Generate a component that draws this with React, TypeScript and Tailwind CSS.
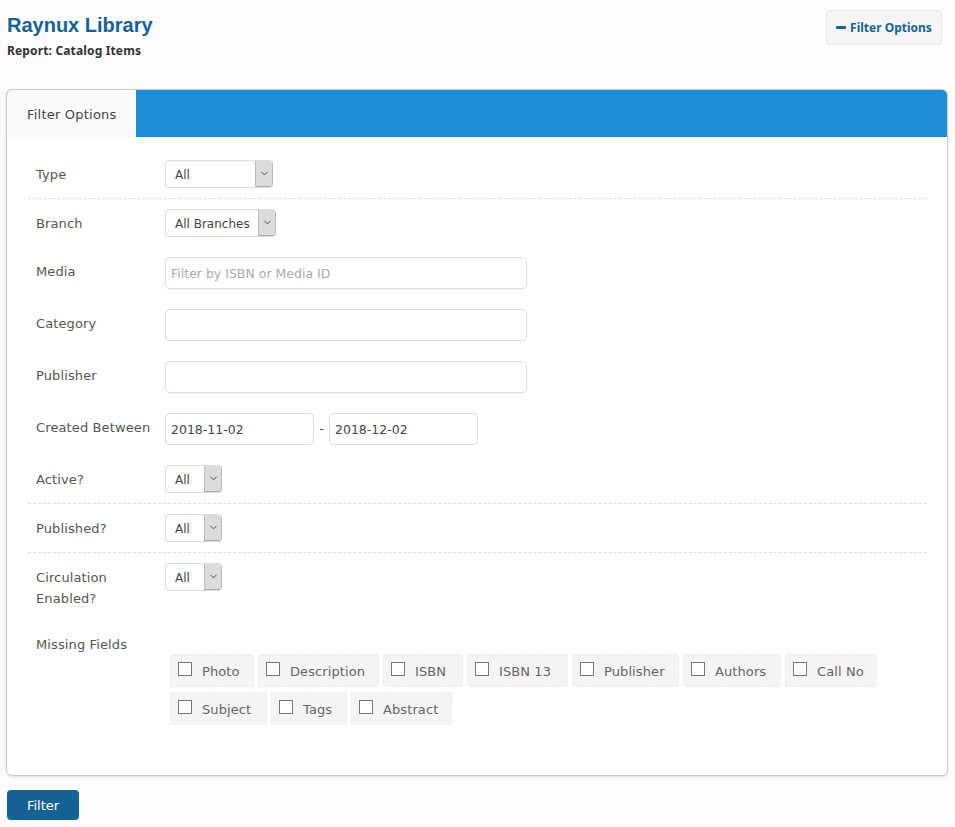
import { ChevronDown } from "lucide-react";

function Label({ children }: { children: React.ReactNode }) {
  return <div className="w-[130px] shrink-0 pl-[1px] pt-[4px] text-[13px] leading-[21px] tracking-[0.12px] text-[#555]">{children}</div>;
}

function Select({ value, width, arrow }: { value: string; width: number; arrow: number }) {
  return (
    <div className="flex h-[28px] overflow-hidden rounded border border-r-0 border-[#ddd] bg-white text-[12px] text-[#444]" style={{ width }}>
      <span className="flex-1 pl-[9px] leading-[28px]">{value}</span>
      <span className="flex items-center justify-center border-x border-b border-x-[#bbb] border-b-[#aaa] bg-[#dcdcdc]" style={{ width: arrow }}>
        <ChevronDown className="h-[11px] w-[11px] text-[#444]" />
      </span>
    </div>
  );
}

function Input({ value, placeholder, width }: { value?: string; placeholder?: string; width: number }) {
  return (
    <div className="h-[32px] rounded border border-[#ddd] bg-white pl-[5px] text-[12.5px] leading-[31px]" style={{ width }}>
      {value ? <span className="text-[#444]">{value}</span> : <span className="text-[#aaa]">{placeholder}</span>}
    </div>
  );
}

function Row({ label, dashed, children }: { label: React.ReactNode; dashed?: boolean; children: React.ReactNode }) {
  return (
    <div className={dashed ? "mb-[10px] flex border-b border-dashed border-[#ddd] pb-[10px] pl-[7px]" : "mb-5 flex pl-[7px]"}>
      <Label>{label}</Label>
      {children}
    </div>
  );
}

function Chip({ label, width }: { label: string; width: number }) {
  return (
    <div className="flex h-[33px] items-start rounded-[3px] border border-dashed border-[#eee] bg-[#f4f4f4] pl-[7px]" style={{ width }}>
      <span className="mt-[7px] h-[14px] w-[14px] shrink-0 border border-[#777] bg-white" />
      <span className="ml-[10px] text-[13px] leading-[33px] tracking-[0.1px] text-[#666]">{label}</span>
    </div>
  );
}

const row1 = [["Photo", 84], ["Description", 121], ["ISBN", 80], ["ISBN 13", 101], ["Publisher", 107], ["Authors", 98], ["Call No", 92]] as const;
const row2 = [["Subject", 97], ["Tags", 76], ["Abstract", 101]] as const;

export default function App() {
  return (
    <div className="h-[827px] overflow-hidden bg-[#fcfcfc] px-[6px]" style={{ fontFamily: '"DejaVu Sans", sans-serif' }}>
      {/* Header */}
      <div className="flex h-[89px] items-start justify-between">
        <div className="pl-[1px] pt-[12px]">
          <h1 className="text-[20px] font-bold leading-[26px] text-[#156394]" style={{ fontFamily: '"Liberation Sans", sans-serif' }}>Raynux Library</h1>
          <p className="mt-[4px] text-[12px] font-bold leading-[17px] tracking-[0.15px] text-[#333]" style={{ fontFamily: '"Noto Sans", sans-serif' }}>Report: Catalog Items</p>
        </div>
        <button className="mr-[7px] mt-[10px] flex h-[35px] w-[116px] items-center justify-center gap-[4px] rounded border border-[#e8e8e8] bg-[#f5f5f5] text-[12px] font-bold text-[#156394]" style={{ fontFamily: '"Noto Sans", sans-serif' }}>
          <span className="h-[3px] w-[10px] rounded-[1px] bg-[#156394]" />
          Filter Options
        </button>
      </div>

      {/* Panel */}
      <div className="h-[687px] w-[942px] overflow-hidden rounded-md border border-[#c8ccd0] bg-white shadow-sm">
        <div className="flex h-[47px] bg-[#1e8cd6]">
          <div className="w-[129px] bg-[#fafafa] pl-[20px] text-[13px] leading-[49px] tracking-[0.22px] text-[#444]">Filter Options</div>
        </div>
        <div className="pl-[21px] pr-[20px] pt-[23px]">
          <Row label="Type" dashed><Select value="All" width={108} arrow={18} /></Row>
          <Row label="Branch"><Select value="All Branches" width={111} arrow={18} /></Row>
          <Row label="Media"><Input placeholder="Filter by ISBN or Media ID" width={362} /></Row>
          <Row label="Category"><Input width={362} /></Row>
          <Row label="Publisher"><Input width={362} /></Row>
          <Row label="Created Between">
            <Input value="2018-11-02" width={149} />
            <span className="w-[15px] text-center text-[13px] leading-[32px] text-[#444]">-</span>
            <Input value="2018-12-02" width={149} />
          </Row>
          <Row label="Active?" dashed><Select value="All" width={57} arrow={18} /></Row>
          <Row label="Published?" dashed><Select value="All" width={57} arrow={18} /></Row>
          <Row label={<>Circulation<br />Enabled?</>}><Select value="All" width={57} arrow={18} /></Row>
          <div className="flex pl-[7px] pt-[1px]">
            <Label>Missing Fields</Label>
            <div className="ml-[5px] mt-[24px] flex flex-col gap-[5px]">
              <div className="flex gap-[4px]">{row1.map(([l, w]) => <Chip key={l} label={l} width={w} />)}</div>
              <div className="flex gap-[4px]">{row2.map(([l, w]) => <Chip key={l} label={l} width={w} />)}</div>
            </div>
          </div>
        </div>
      </div>

      <button className="ml-[1px] mt-[14px] h-[30px] w-[72px] rounded bg-[#156394] pt-[1px] text-[13px] text-white">Filter</button>
    </div>
  );
}
